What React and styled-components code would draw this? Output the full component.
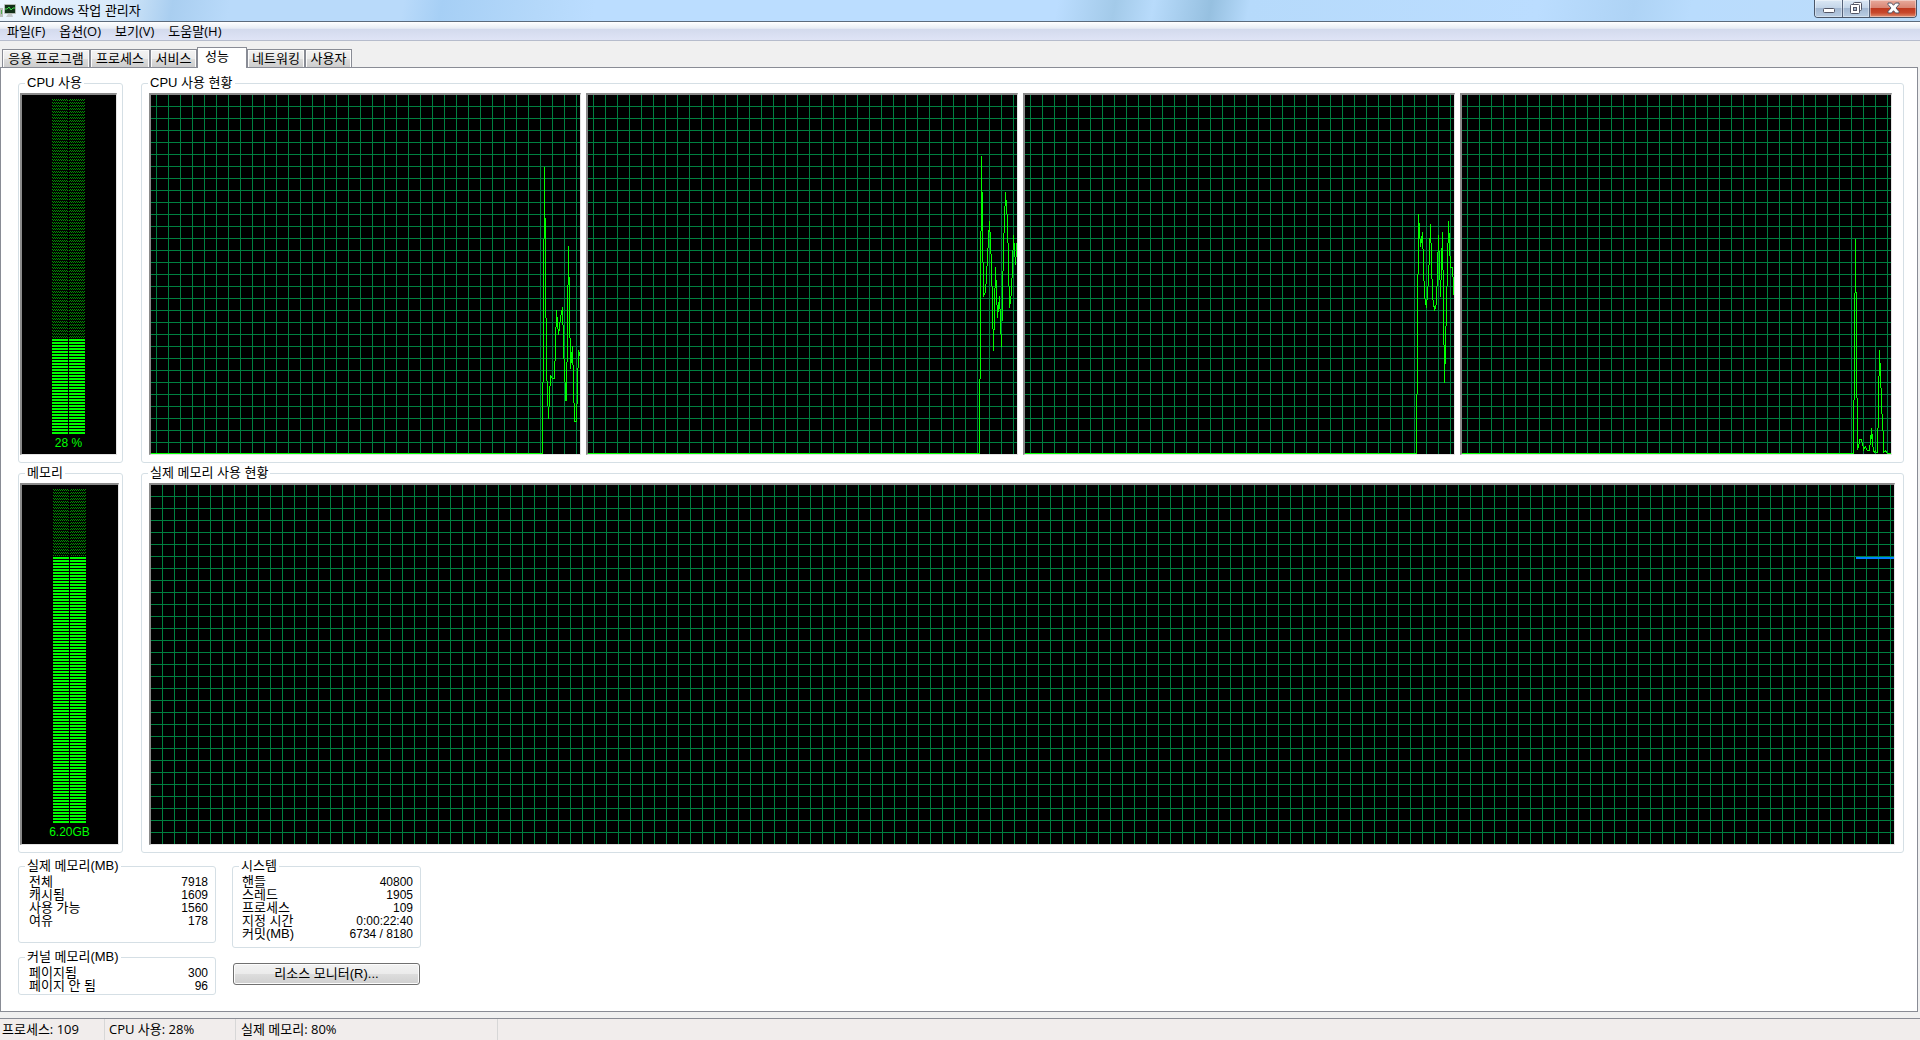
import React from "react";
import styled, { createGlobalStyle } from "styled-components";

const GlobalStyle = createGlobalStyle`
  *, *::before, *::after { box-sizing: border-box; }
  body { margin: 0; background: #f0f0f0; }
  button { font: inherit; color: inherit; }
`;

const uiFont = `"Open Sans", "Noto Sans CJK KR", sans-serif`;
const dialogFont = `"Liberation Sans", "Noto Sans CJK KR", sans-serif`;

const Window = styled.div`
  display: flex;
  flex-direction: column;
  min-height: 100vh;
  font: 13px/16px ${dialogFont};
  color: #000;
`;

const TitleBar = styled.header`
  display: flex;
  align-items: flex-start;
  height: 22px;
  border-bottom: 1px solid #5c6b7c;
  background:
    linear-gradient(100deg, #eaf4fd 0%, #d8eafa 6%, #a9cef0 9%, #b9dafa 12%, #b9dafa 21%,
      #a6cff5 23%, #b4d8fa 28%, #bbddff 31%, #bbddff 55%, #a3cae9 58%, #b8dbfb 60%,
      #96c0e0 63%, #b6dafb 65%, #bbddff 80%, #aed3f5 85%, #b9dcfd 88%, #bcdcfa 100%);
`;

const AppIcon = styled.svg`
  flex: none;
  margin-top: 3px;
`;

const Title = styled.h1`
  flex: 1;
  margin: 2px 0 0 5px;
  font: 13px/18px ${dialogFont};
`;

const WindowButtons = styled.div`
  display: flex;
  height: 18px;
  margin-right: 3px;
  border: 1px solid #4a5668;
  border-top: 0;
  border-radius: 0 0 4px 4px;
  overflow: hidden;
`;

const WindowButton = styled.button`
  display: flex;
  align-items: center;
  justify-content: center;
  width: ${(p) => (p.$close ? 47 : 27)}px;
  padding: 0 0 1px;
  border: 0;
  border-left: ${(p) => (p.$first ? "0" : "1px solid #56637a")};
  box-shadow: inset 0 0 0 1px rgba(255, 255, 255, 0.4);
  background: ${(p) =>
    p.$close
      ? "linear-gradient(#e8aa9c 0, #d98674 45%, #bf3a20 50%, #c8482c 75%, #e08f72 100%)"
      : "linear-gradient(#dbe8f5 0, #c4d5e8 45%, #a3b8d2 50%, #b9cde2 100%)"};
`;

const MenuBar = styled.nav`
  display: flex;
  height: 19px;
  border-bottom: 1px solid #b6bccc;
  background: linear-gradient(#ffffff 0, #e8edf5 35%, #d3daed 40%, #dfe4f6 100%);
`;

const MenuItem = styled.button`
  padding: 0 7px;
  border: 0;
  background: none;
  font: 13px/18px ${uiFont};
`;

const TabStrip = styled.div`
  display: flex;
  align-items: flex-end;
  height: 26px;
  padding-left: 2px;
`;

const Tab = styled.button`
  width: ${(p) => p.$width}px;
  height: ${(p) => (p.$active ? 21 : 18)}px;
  margin-bottom: ${(p) => (p.$active ? -1 : 0)}px;
  padding: ${(p) => (p.$active ? "0 0 3px 7px" : "0")};
  border: 1px solid #898c95;
  border-bottom: 0;
  background: ${(p) => (p.$active ? "#fff" : "linear-gradient(#f3f3f3 0, #ebebeb 50%, #dddddd 51%, #cdcdcd 100%)")};
  box-shadow: ${(p) => (p.$active ? "none" : "inset 1px 1px 0 #fcfcfc, inset -1px 0 0 #fcfcfc")};
  text-align: ${(p) => (p.$active ? "left" : "center")};
  line-height: 16px;
  white-space: nowrap;
  z-index: ${(p) => (p.$active ? 1 : 0)};
`;

const Panel = styled.main`
  display: flex;
  flex: 1;
  flex-direction: column;
  gap: 3px;
  margin-right: 2px;
  padding: 8px 13px 13px 17px;
  border: 1px solid #898c95;
  background: #fff;
`;

const ChartRow = styled.div`
  display: grid;
  grid-template-columns: 105px minmax(0, 1fr);
  column-gap: 18px;
`;

const Group = styled.fieldset`
  min-width: 0;
  margin: 0;
  padding: ${(p) => p.$pad || "0"};
  border: 1px solid #d5dfe5;
  border-radius: 3px;
`;

const GroupTitle = styled.legend`
  height: 15px;
  margin-left: ${(p) => p.$indent || 5}px;
  padding: 0 2px;
  line-height: 14px;
`;

const Sunken = styled.div`
  height: 362px;
  border: solid;
  border-width: 2px 1px 1px 2px;
  border-color: #8a8a8a #e3e3e3 #e3e3e3 #8a8a8a;
  background: #000;
`;

const MeterBox = styled(Sunken)`
  display: flex;
  flex-direction: column;
  align-items: center;
  width: ${(p) => p.$width}px;
  padding: 4px 1px 0 0;
  color: #00ff00;
`;

const MeterValue = styled.output`
  margin-top: 2px;
  font: 12px/14px ${dialogFont};
`;

const Plots = styled.div`
  display: flex;
  gap: 5px;
`;

const Plot = styled(Sunken)`
  display: flex;
  flex: 1;
  min-width: 0;
  background:
    linear-gradient(#008040 1px, transparent 1px) ${(p) => p.$gridX}px 11px / 12px 12px,
    linear-gradient(90deg, #008040 1px, transparent 1px) ${(p) => p.$gridX}px 11px / 12px 12px,
    #000;
`;

const IdleLine = styled.div`
  flex: 1;
  border-bottom: 1px solid ${(p) => p.$color};
`;

const Details = styled.div`
  display: grid;
  grid-template-columns: 198px 189px;
  column-gap: 16px;
  margin-top: 3px;
`;

const DetailColumn = styled.div`
  display: flex;
  flex-direction: column;
  gap: ${(p) => p.$gap}px;
`;

const Stats = styled.table`
  width: 100%;
  border-collapse: collapse;
  line-height: 12px;
  th, td { height: 13px; padding: 0; font-weight: normal; }
  th { text-align: left; }
  td { text-align: right; font-size: 12px; }
`;

const MonitorButton = styled.button`
  height: 22px;
  margin: 0 1px;
  border: 1px solid #707070;
  border-radius: 3px;
  background: linear-gradient(#f2f2f2 0, #ebebeb 50%, #dddddd 51%, #cfcfcf 100%);
  box-shadow: inset 0 0 0 1px #fcfcfc;
  line-height: 18px;
`;

const StatusBar = styled.footer`
  display: flex;
  height: 22px;
  margin-top: 6px;
  border-top: 1px solid #898c95;
  background: #f1edec;
  font: 13px/20px ${uiFont};
`;

const StatusCell = styled.span`
  width: ${(p) => p.$width}px;
  padding-left: ${(p) => p.$pad}px;
  border-right: 1px solid #d7d7d7;
  white-space: nowrap;
`;

function Meter({ width, height, lit, label }) {
  const id = `unlit-${width}`;
  const rows = Array.from({ length: lit }, (_, i) => height - 2 - i * 3);
  const unlitHeight = height - lit * 3;
  return (
    <MeterBox $width={width}>
      <svg width="33" height={height} shapeRendering="crispEdges" role="img" aria-label={label}>
        <defs>
          <pattern id={id} width="2" height="3" patternUnits="userSpaceOnUse">
            <rect x="0" y="0" width="1" height="1" fill="#009000" />
            <rect x="1" y="1" width="1" height="1" fill="#009000" />
          </pattern>
        </defs>
        <rect width="16" height={unlitHeight} fill={`url(#${id})`} />
        <rect x="17" width="16" height={unlitHeight} fill={`url(#${id})`} />
        <path fill="#00ff00" d={rows.map((y) => `M0 ${y}h16v2h-16zM17 ${y}h16v2h-16z`).join("")} />
      </svg>
      <MeterValue>{label}</MeterValue>
    </MeterBox>
  );
}

/* Each sample is one pixel column of the trace: [top, bottom]. */
const CPU_TRACES = [
  [[287, 359], [144, 287], [72, 144], [123, 223], [223, 286], [286, 311], [312, 324], [291, 312], [280, 291],
    [281, 283], [283, 284], [283, 284], [266, 284], [232, 266], [215, 232], [222, 234], [234, 240], [227, 236],
    [220, 227], [215, 220], [212, 230], [230, 264], [264, 287], [287, 306], [267, 306], [190, 267], [151, 190],
    [182, 243], [243, 274], [257, 268], [251, 270], [270, 308], [308, 327], [326, 327], [309, 327], [273, 309],
    [255, 273], [257, 261]],
  [[284, 359], [136, 284], [61, 136], [97, 167], [167, 202], [198, 200], [189, 198], [171, 189], [153, 171],
    [135, 153], [126, 137], [137, 159], [159, 191], [191, 234], [234, 256], [193, 235], [172, 193], [185, 210],
    [210, 223], [207, 217], [201, 214], [214, 239], [239, 252], [176, 226], [138, 176], [111, 138], [97, 111],
    [105, 119], [119, 148], [148, 191], [191, 213], [201, 209], [183, 201], [155, 183], [140, 155], [148, 162],
    [162, 170], [148, 162]],
  [[299, 359], [179, 299], [119, 179], [128, 144], [144, 152], [141, 148], [137, 154], [154, 186], [186, 204],
    [204, 210], [205, 213], [191, 205], [170, 191], [143, 170], [129, 148], [148, 184], [184, 205], [205, 212],
    [211, 216], [210, 214], [191, 210], [157, 191], [140, 157], [156, 185], [185, 202], [153, 185], [137, 175],
    [175, 250], [250, 288], [231, 269], [191, 231], [148, 191], [126, 148], [138, 161], [161, 173], [172, 173],
    [172, 182], [182, 200]],
  [[305, 359], [198, 305], [144, 198], [197, 303], [303, 355], [349, 353], [344, 349], [344, 345], [344, 347],
    [347, 351], [351, 356], [352, 354], [351, 353], [353, 355], [355, 356], [355, 356], [350, 356], [340, 350],
    [333, 344], [339, 352], [352, 357], [356, 358], [355, 357], [357, 358], [333, 358], [281, 333], [255, 281],
    [268, 293], [293, 319], [319, 336], [336, 358], [356, 357], [355, 357], [356, 358], [358, 359], [358, 359],
    [358, 359], [358, 359]],
];

function CpuPlot({ trace, index }) {
  return (
    <Plot $gridX={5}>
      <IdleLine $color="#00ff00" />
      <svg width="38" height="359" shapeRendering="crispEdges" role="img" aria-label={`CPU ${index}`}>
        <path fill="#00ff00" d={trace.map(([top, bottom], x) => `M${x} ${top}h1V${bottom}h-1z`).join("")} />
      </svg>
    </Plot>
  );
}

function StatTable({ rows }) {
  return (
    <Stats>
      <tbody>
        {rows.map(([name, value]) => (
          <tr key={name}>
            <th scope="row">{name}</th>
            <td>{value}</td>
          </tr>
        ))}
      </tbody>
    </Stats>
  );
}

const TABS = [
  ["응용 프로그램", 88],
  ["프로세스", 60],
  ["서비스", 47],
  ["성능", 50],
  ["네트워킹", 58],
  ["사용자", 47],
];

export default function App() {
  return (
    <Window>
      <GlobalStyle />
      <TitleBar>
        <AppIcon width="16" height="15" viewBox="0 0 16 15" aria-hidden="true">
          <rect x="0" y="5" width="3" height="9" fill="#b9bfb9" />
          <rect x="1" y="7" width="1" height="4" fill="#4fae4f" />
          <rect x="4" y="1" width="12" height="10" rx="1" fill="#b4bbb6" />
          <rect x="5" y="2" width="10" height="8" fill="#123018" />
          <path d="M5 6h2l2-2 2 3 2-2h2" fill="none" stroke="#3ddc4c" />
          <path d="M8 11h4l1 3H6z" fill="#c4c9cc" />
        </AppIcon>
        <Title>Windows 작업 관리자</Title>
        <WindowButtons>
          <WindowButton $first aria-label="최소화">
            <svg width="12" height="14" viewBox="0 0 12 14">
              <rect x="0.5" y="7.5" width="11" height="4" rx="1" fill="#fff" stroke="#535666" />
            </svg>
          </WindowButton>
          <WindowButton aria-label="이전 크기로 복원">
            <svg width="12" height="13" viewBox="0 0 12 13">
              <rect x="3.5" y="0.5" width="8" height="8" rx="1" fill="#fff" stroke="#535666" />
              <rect x="0.5" y="2.5" width="9" height="9" rx="1" fill="#fff" stroke="#535666" />
              <rect x="3.5" y="5.5" width="3" height="3" fill="#a9bcd5" stroke="#535666" />
            </svg>
          </WindowButton>
          <WindowButton $close aria-label="닫기">
            <svg width="13" height="12" viewBox="0 0 13 12">
              <path
                d="M1 1h3.5l2 2.3L8.5 1H12v1.5L9 6l3 3.500V11H8.500L6.500 8.700 4.500 11H1V9.500L4 6 1 2.500z"
                fill="#fff"
                stroke="#535666"
              />
            </svg>
          </WindowButton>
        </WindowButtons>
      </TitleBar>
      <MenuBar>
        {["파일(F)", "옵션(O)", "보기(V)", "도움말(H)"].map((name) => (
          <MenuItem key={name}>{name}</MenuItem>
        ))}
      </MenuBar>
      <TabStrip role="tablist">
        {TABS.map(([name, width]) => (
          <Tab key={name} role="tab" $width={width} $active={name === "성능"} aria-selected={name === "성능"}>
            {name}
          </Tab>
        ))}
      </TabStrip>
      <Panel>
        <ChartRow>
          <Group $pad="2px 0 7px 1px">
            <GroupTitle>CPU 사용</GroupTitle>
            <Meter width={97} height={335} lit={32} label="28 %" />
          </Group>
          <Group $pad="2px 11px 7px 7px">
            <GroupTitle $indent={-1}>CPU 사용 현황</GroupTitle>
            <Plots>
              {CPU_TRACES.map((trace, i) => (
                <CpuPlot key={i} trace={trace} index={i} />
              ))}
            </Plots>
          </Group>
        </ChartRow>
        <ChartRow>
          <Group $pad="2px 0 7px 1px">
            <GroupTitle>메모리</GroupTitle>
            <Meter width={99} height={334} lit={89} label="6.20GB" />
          </Group>
          <Group $pad="2px 8px 7px 7px">
            <GroupTitle $indent={-1}>실제 메모리 사용 현황</GroupTitle>
            <Plots>
              <Plot $gridX={11}>
                <IdleLine $color="transparent" />
                <svg width="38" height="359" shapeRendering="crispEdges" role="img" aria-label="6.20GB">
                  <rect y="72" width="38" height="2" fill="#0080ff" />
                </svg>
              </Plot>
            </Plots>
          </Group>
        </ChartRow>
        <Details>
          <DetailColumn $gap={7}>
            <Group $pad="1px 7px 15px 10px">
              <GroupTitle $indent={-4}>실제 메모리(MB)</GroupTitle>
              <StatTable
                rows={[
                  ["전체", "7918"],
                  ["캐시됨", "1609"],
                  ["사용 가능", "1560"],
                  ["여유", "178"],
                ]}
              />
            </Group>
            <Group $pad="1px 7px 2px 10px">
              <GroupTitle $indent={-4}>커널 메모리(MB)</GroupTitle>
              <StatTable
                rows={[
                  ["페이지됨", "300"],
                  ["페이지 안 됨", "96"],
                ]}
              />
            </Group>
          </DetailColumn>
          <DetailColumn $gap={15}>
            <Group $pad="1px 7px 7px 9px">
              <GroupTitle $indent={-3}>시스템</GroupTitle>
              <StatTable
                rows={[
                  ["핸들", "40800"],
                  ["스레드", "1905"],
                  ["프로세스", "109"],
                  ["지정 시간", "0:00:22:40"],
                  ["커밋(MB)", "6734 / 8180"],
                ]}
              />
            </Group>
            <MonitorButton>리소스 모니터(R)...</MonitorButton>
          </DetailColumn>
        </Details>
      </Panel>
      <StatusBar>
        <StatusCell $width={105} $pad={2}>프로세스: 109</StatusCell>
        <StatusCell $width={131} $pad={4}>CPU 사용: 28%</StatusCell>
        <StatusCell $width={262} $pad={5}>실제 메모리: 80%</StatusCell>
      </StatusBar>
    </Window>
  );
}
